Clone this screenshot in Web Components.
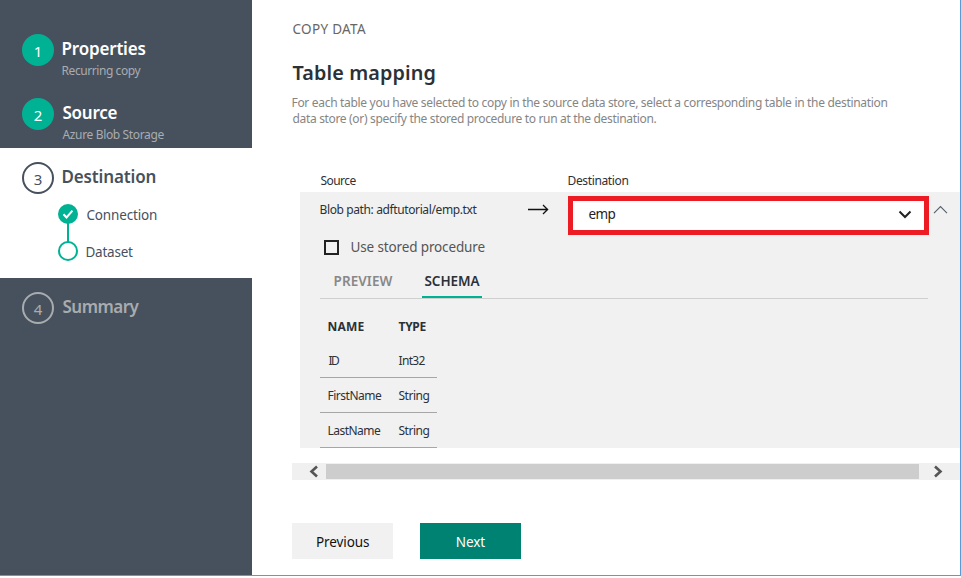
<!DOCTYPE html>
<html lang="en">
<head>
<meta charset="utf-8">
<title>Copy Data</title>
<style>
html,body{margin:0;height:100%;background:#fff;overflow:hidden}
body{font-family:"Noto Sans","Open Sans",sans-serif}
</style>
</head>
<body>
<copy-wizard></copy-wizard>
<script>
const define = (name, html, setup) => {
  const tpl = document.createElement('template');
  tpl.innerHTML = html;
  customElements.define(name, class extends HTMLElement {
    constructor() {
      super();
      this.attachShadow({mode: 'open'}).append(tpl.content.cloneNode(true));
    }
    connectedCallback() { if (setup) setup(this, this.shadowRoot); }
  });
};

// One line of text. "w" is the visible width, "size" the font size.
const ctx = document.createElement('canvas').getContext('2d');
define('text-line', `<style>
:host{display:block;height:20px;line-height:20px;white-space:nowrap;flex:none}
span{display:block}
</style><span><slot></slot></span>`, (el, root) => {
  const text = el.textContent, span = root.querySelector('span');
  const size = el.getAttribute('size') || '12', weight = el.getAttribute('weight') || '400';
  el.style.fontSize = size + 'px';
  el.style.fontWeight = weight;
  const w = +el.getAttribute('w');
  ctx.font = `${weight} ${size}px "Noto Sans","Open Sans",sans-serif`;
  const m = ctx.measureText(text);
  const ink = m.actualBoundingBoxLeft + m.actualBoundingBoxRight;
  el.style.width = w + 'px';
  span.style.marginLeft = m.actualBoundingBoxLeft + 0.5 + 'px';
  if (text.length > 1) span.style.letterSpacing = ((w - ink) / (text.length - 1)).toFixed(3) + 'px';
});

define('step-badge', `<style>
:host{display:flex;box-sizing:border-box;width:32px;height:32px;border-radius:50%;border:2px solid var(--ring);background:var(--fill);color:var(--ink);justify-content:center;font-size:15px;line-height:30px;flex:none}
:host([done]){--ring:#00b294;--fill:#00b294;--ink:#fff}
:host([current]){--ring:#47515d;--fill:#fff;--ink:#47515d}
:host([todo]){--ring:#a9acaf;--fill:transparent;--ink:#a9acaf}
</style><slot></slot>`);

define('wizard-step', `<style>
:host{display:block;box-sizing:border-box;height:64px;padding:14px 0 0 22px;color:#fff}
:host([active]){height:130px;background:#fff;color:#47515d}
:host([dim]){color:#a9acaf}
.row{display:flex;gap:8px}
.t{display:flex;flex-direction:column;padding-top:5px}
.s{display:block;margin-top:2px;color:#a9acb0}
</style><div class="row"><slot name="badge"></slot><div class="t"><slot name="title"></slot><div class="s"><slot name="sub"></slot></div></div></div><slot></slot>`);

define('sub-steps', `<style>
:host{display:grid;grid-template-columns:20px auto;column-gap:8px;margin:10px 0 0 36px;justify-content:start;color:#47515d}
svg{display:block}
.l{display:flex;flex-direction:column;gap:17px;padding-top:1px}
</style><svg width="20" height="57" viewBox="0 0 20 57"><path d="M10 19v19" stroke="#00b294" stroke-width="2"/><circle cx="10" cy="10" r="10" fill="#00b294"/><path d="M5.5 10.2l3 3.2 6-6.8" fill="none" stroke="#fff" stroke-width="2"/><circle cx="10" cy="47" r="9" fill="#fff" stroke="#00b294" stroke-width="2"/></svg>
<div class="l"><text-line w="70.5" size="13.5">Connection</text-line><text-line w="46.5" size="13.5">Dataset</text-line></div>`);

define('wizard-nav', `<style>
:host{display:block;box-sizing:border-box;width:252px;padding-top:20px;background:#47515d;flex:none}
</style>
<wizard-step><step-badge slot="badge" done>1</step-badge><text-line slot="title" w="83" size="17" weight="600">Properties</text-line><text-line slot="sub" w="79">Recurring copy</text-line></wizard-step>
<wizard-step><step-badge slot="badge" done>2</step-badge><text-line slot="title" w="55" size="17" weight="600">Source</text-line><text-line slot="sub" w="102">Azure Blob Storage</text-line></wizard-step>
<wizard-step active><step-badge slot="badge" current>3</step-badge><text-line slot="title" w="93" size="17" weight="600">Destination</text-line><sub-steps></sub-steps></wizard-step>
<wizard-step dim><step-badge slot="badge" todo>4</step-badge><text-line slot="title" w="77" size="17" weight="600">Summary</text-line></wizard-step>`);

define('table-select', `<style>
:host{display:flex;box-sizing:border-box;width:361px;height:39px;border:5px solid #ed1c24;background:#fff;padding:3px 12px 0 15px;justify-content:space-between;color:#222}
svg{display:block;margin-top:6px}
</style><slot></slot><svg width="14" height="10" viewBox="0 0 14 10"><path d="M1.5 1.5L7 7l5.500-5.500" fill="none" stroke="#222" stroke-width="2"/></svg>`);

define('check-field', `<style>
:host{display:flex;gap:12px;color:#555}
i{box-sizing:border-box;width:15px;height:15px;border:2px solid #222;margin-top:3px}
</style><i></i><slot></slot>`);

define('tab-bar', `<style>
:host{display:flex;box-sizing:border-box;width:608px;height:28px;border-bottom:1px solid #cfcfcf;padding-left:14px;gap:30px;color:#888}
.on{box-sizing:border-box;width:60px;height:27px;border-bottom:2px solid #00b294;padding-left:2px;color:#2b3138}
</style><text-line w="58" size="13.5" weight="600">PREVIEW</text-line><div class="on"><text-line w="56" size="13.5" weight="600">SCHEMA</text-line></div>`);

define('schema-table', `<style>
:host{display:block;width:117px;color:#2b3138}
.r{display:grid;grid-template-columns:70px auto;box-sizing:border-box;height:35px;padding:8px 0 0 8px;border-bottom:1px solid #a6a6a6}
.h{border:0;padding-top:9px}
</style>
<div class="r h"><text-line w="36" weight="700">NAME</text-line><text-line w="28" weight="700">TYPE</text-line></div>
<div class="r"><text-line w="11.500">ID</text-line><text-line w="27">Int32</text-line></div>
<div class="r"><text-line w="53.500">FirstName</text-line><text-line w="31">String</text-line></div>
<div class="r"><text-line w="52.500">LastName</text-line><text-line w="31">String</text-line></div>`);

define('mapping-panel', `<style>
:host{display:block;box-sizing:border-box;width:660px;height:256px;margin-left:8px;padding:4px 0 0 20px;background:#f1f1f1;color:#2b3138}
.top{display:flex;height:44px;align-items:flex-start}
.path{width:207px;padding-top:4px}
.arrow{width:41px;padding-top:8px}
svg{display:block}
.up{margin:9px 0 0 4px}
check-field{box-sizing:border-box;height:35px;padding-top:1px;margin:-4px 0 0 4px}
schema-table{margin-top:9px}
</style>
<div class="top"><div class="path"><text-line w="157">Blob path: adftutorial/emp.txt</text-line></div>
<div class="arrow"><svg width="22" height="12" viewBox="0 0 22 12"><path d="M1 5.500h19.500M16 1l4.600 4.500L16 10" fill="none" stroke="#111" stroke-width="1.300"/></svg></div>
<table-select><text-line w="27" size="13.5">emp</text-line></table-select>
<svg class="up" width="16" height="10" viewBox="0 0 16 10"><path d="M1 8.200l6.500-6.700L14 8.200" fill="none" stroke="#555f6b" stroke-width="1.100"/></svg></div>
<check-field><text-line w="133" size="13.5">Use stored procedure</text-line></check-field>
<tab-bar></tab-bar>
<schema-table></schema-table>`);

define('scroll-bar', `<style>
:host{display:flex;box-sizing:border-box;width:668px;height:17px;background:#f0f0f0;margin-top:15px;align-items:center}
i{width:593px;height:15px;background:#cdcdcd}
svg{display:block}
.a{margin:0 7px 0 16px}.b{margin-left:14px}
</style><svg class="a" width="11" height="13" viewBox="0 0 11 13"><path d="M9 1.500L3.500 6.500 9 11.500" fill="none" stroke="#555" stroke-width="2.600"/></svg><i></i><svg class="b" width="11" height="13" viewBox="0 0 11 13"><path d="M2 1.500l5.500 5L2 11.500" fill="none" stroke="#555" stroke-width="2.600"/></svg>`);

define('wizard-button', `<style>
:host{display:flex;box-sizing:border-box;width:101px;height:36px;justify-content:center;padding-top:9px;background:#f1f1f1;color:#111}
:host([primary]){background:#008272;color:#fff}
</style><slot></slot>`);

define('wizard-page', `<style>
:host{display:block;box-sizing:border-box;width:708px;padding:19px 0 0 40px;color:#666}
h1{margin:24px 0 0;font:inherit;color:#2b3138}
.d{margin-top:12px;color:#858585}
.d text-line{height:16px;line-height:16px}
.heads{display:flex;padding-left:28px;gap:212px;margin-top:44px;height:21px;color:#2b3138}
.b{display:flex;gap:27px;margin-top:43px}
</style>
<text-line w="73.500" size="13.500">COPY DATA</text-line>
<h1><text-line w="142" size="19.800" weight="600">Table mapping</text-line></h1>
<div class="d"><text-line w="595">For each table you have selected to copy in the source data store, select a corresponding table in the destination</text-line><text-line w="364">data store (or) specify the stored procedure to run at the destination.</text-line></div>
<div class="heads"><text-line w="36">Source</text-line><text-line w="60">Destination</text-line></div>
<mapping-panel></mapping-panel>
<scroll-bar></scroll-bar>
<div class="b"><wizard-button><text-line w="52" size="13.5">Previous</text-line></wizard-button><wizard-button primary><text-line w="28.500" size="13.5">Next</text-line></wizard-button></div>`);

define('copy-wizard', `<style>
:host{display:flex;box-sizing:border-box;width:961px;height:576px;border-right:1px solid #5b9bd5;border-bottom:1px solid #5b9bd5;background:#fff}
</style><wizard-nav></wizard-nav><wizard-page></wizard-page>`);
</script>
</body>
</html>
